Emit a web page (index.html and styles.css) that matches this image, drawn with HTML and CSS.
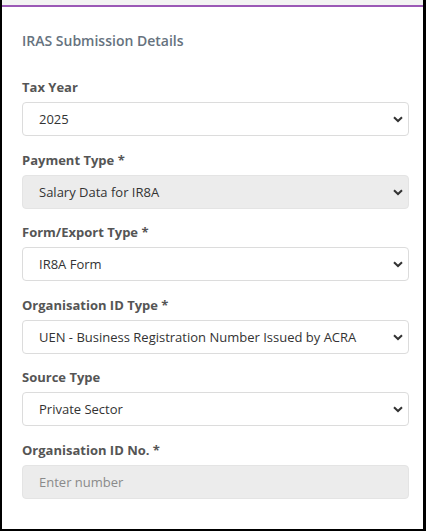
FILE: index.html
```html
<!DOCTYPE html>
<html>
<head>
<meta charset="utf-8">
<link rel="stylesheet" href="styles.css">
</head>
<body>
<div class="frame">
  <div class="topstrip"></div>
  <div class="accent"></div>
  <div class="content">
    <h2 class="title">IRAS Submission Details</h2>
    <div class="field">
      <label class="label">Tax Year</label>
      <div class="select-wrap">
        <select class="control"><option>2025</option></select>
        <svg class="chev" viewBox="0 0 10 7" width="10" height="7"><path d="M1 1.2 L5 5 L9 1.2" fill="none" stroke="#333" stroke-width="2"/></svg>
      </div>
    </div>
    <div class="field">
      <label class="label">Payment Type *</label>
      <div class="select-wrap">
        <select class="control disabled"><option>Salary Data for IR8A</option></select>
        <svg class="chev" viewBox="0 0 10 7" width="10" height="7"><path d="M1 1.2 L5 5 L9 1.2" fill="none" stroke="#333" stroke-width="2"/></svg>
      </div>
    </div>
    <div class="field">
      <label class="label">Form/Export Type *</label>
      <div class="select-wrap">
        <select class="control"><option>IR8A Form</option></select>
        <svg class="chev" viewBox="0 0 10 7" width="10" height="7"><path d="M1 1.2 L5 5 L9 1.2" fill="none" stroke="#333" stroke-width="2"/></svg>
      </div>
    </div>
    <div class="field">
      <label class="label">Organisation ID Type *</label>
      <div class="select-wrap">
        <select class="control"><option>UEN - Business Registration Number Issued by ACRA</option></select>
        <svg class="chev" viewBox="0 0 10 7" width="10" height="7"><path d="M1 1.2 L5 5 L9 1.2" fill="none" stroke="#333" stroke-width="2"/></svg>
      </div>
    </div>
    <div class="field">
      <label class="label">Source Type</label>
      <div class="select-wrap">
        <select class="control"><option>Private Sector</option></select>
        <svg class="chev" viewBox="0 0 10 7" width="10" height="7"><path d="M1 1.2 L5 5 L9 1.2" fill="none" stroke="#333" stroke-width="2"/></svg>
      </div>
    </div>
    <div class="field">
      <label class="label">Organisation ID No. *</label>
      <input class="control disabled" type="text" placeholder="Enter number">
    </div>
  </div>
</div>
</body>
</html>
```
FILE: styles.css
```css
html, body {
  margin: 0;
  padding: 0;
  background: #fff;
}
.frame {
  box-sizing: border-box;
  width: 426px;
  height: 531px;
  border-left: 2px solid #000;
  border-right: 3px solid #000;
  border-bottom: 2px solid #000;
  font-family: "Open Sans", sans-serif;
  overflow: hidden;
}
.topstrip {
  height: 5px;
  background: #f3f3f3;
}
.accent {
  height: 2px;
  background: #9b59b6;
}
.content {
  padding: 0 14px 0 20px;
}
.title {
  margin: 25px 0 28px;
  font-size: 14px;
  font-weight: 600;
  color: #66727e;
  line-height: 18px;
}
.field {
  margin-bottom: 14.6px;
}
.label {
  display: block;
  font-size: 13px;
  font-weight: 700;
  color: #555;
  line-height: 18px;
  margin-bottom: 6px;
}
.select-wrap {
  position: relative;
}
.control {
  box-sizing: border-box;
  display: block;
  width: 100%;
  height: 34px;
  padding: 0 30px 0 16px;
  border: 1px solid #dcdcdc;
  border-radius: 4px;
  background: #fff;
  font-family: "Open Sans", sans-serif;
  font-size: 13px;
  color: #333;
  appearance: none;
  -webkit-appearance: none;
  outline: none;
}
.control.disabled {
  background: #ececec;
  border-color: #e4e4e4;
}
.control::placeholder {
  color: #8a8a8a;
}
.chev {
  position: absolute;
  right: 6px;
  top: 14px;
  pointer-events: none;
}
```
